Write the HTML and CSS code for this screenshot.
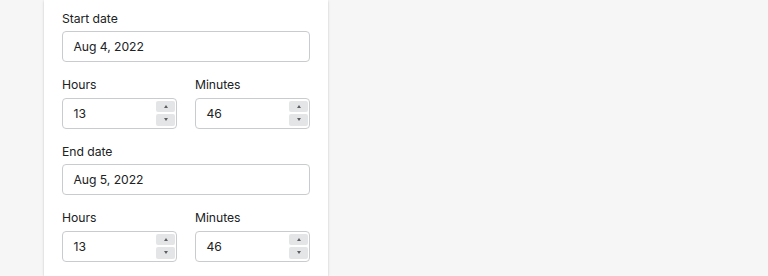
FILE: index.html
```html
<!DOCTYPE html>
<html lang="en">
<head>
  <meta charset="UTF-8">
  <title>Date range</title>
  <link rel="stylesheet" href="styles.css">
</head>
<body>

<div class="card">
  <div class="field">
    <div class="label">Start date</div>
    <div class="input">Aug 4, 2022</div>
  </div>

  <div class="field-row">
    <div class="field">
      <div class="label">Hours</div>
      <div class="input number">13
        <div class="spinner">
          <div class="spin-btn"><span class="caret up"></span></div>
          <div class="spin-btn"><span class="caret down"></span></div>
        </div>
      </div>
    </div>
    <div class="field">
      <div class="label">Minutes</div>
      <div class="input number">46
        <div class="spinner">
          <div class="spin-btn"><span class="caret up"></span></div>
          <div class="spin-btn"><span class="caret down"></span></div>
        </div>
      </div>
    </div>
  </div>

  <div class="field">
    <div class="label">End date</div>
    <div class="input">Aug 5, 2022</div>
  </div>

  <div class="field-row">
    <div class="field">
      <div class="label">Hours</div>
      <div class="input number">13
        <div class="spinner">
          <div class="spin-btn"><span class="caret up"></span></div>
          <div class="spin-btn"><span class="caret down"></span></div>
        </div>
      </div>
    </div>
    <div class="field">
      <div class="label">Minutes</div>
      <div class="input number">46
        <div class="spinner">
          <div class="spin-btn"><span class="caret up"></span></div>
          <div class="spin-btn"><span class="caret down"></span></div>
        </div>
      </div>
    </div>
  </div>
</div>

</body>
</html>
```

FILE: styles.css
```css
html,
body {
  height: 100%;
}

body {
  margin: 0;
  padding: 0;
  background: #f6f6f7;
  font-family: 'Inter', 'Noto Sans', sans-serif;
  font-size: 12.2px;
  letter-spacing: -0.05px;
  color: #202223;
  overflow: hidden;
}

.card {
  box-sizing: border-box;
  height: 100%;
  width: 284px;
  margin-left: 44px;
  padding: 9.5px 18px 0;
  background: #fff;
  box-shadow: 0 0 4px rgba(23, 24, 24, 0.05), 0 1px 2px rgba(0, 0, 0, 0.15);
  display: flex;
  flex-direction: column;
  gap: 14px;
}

.field-row {
  display: flex;
  gap: 18px;
}

.field-row .field {
  flex: 1;
}

.label {
  line-height: 17.5px;
  margin-bottom: 4px;
}

.input {
  position: relative;
  box-sizing: border-box;
  height: 31px;
  line-height: 29px;
  padding: 0 10.5px;
  border: 1px solid #c9cccf;
  border-radius: 4px;
  background: #fff;
}

.spinner {
  position: absolute;
  top: 2px;
  bottom: 2px;
  right: 1px;
  width: 19px;
  display: flex;
  flex-direction: column;
  gap: 2px;
}

.spin-btn {
  flex: 1;
  background: #e4e5e7;
  border-radius: 2px;
  display: flex;
  align-items: center;
  justify-content: center;
}

.caret {
  width: 0;
  height: 0;
  border-left: 2.5px solid transparent;
  border-right: 2.5px solid transparent;
}

.caret.up {
  border-bottom: 3px solid #5c5f62;
}

.caret.down {
  border-top: 3px solid #5c5f62;
}
```
